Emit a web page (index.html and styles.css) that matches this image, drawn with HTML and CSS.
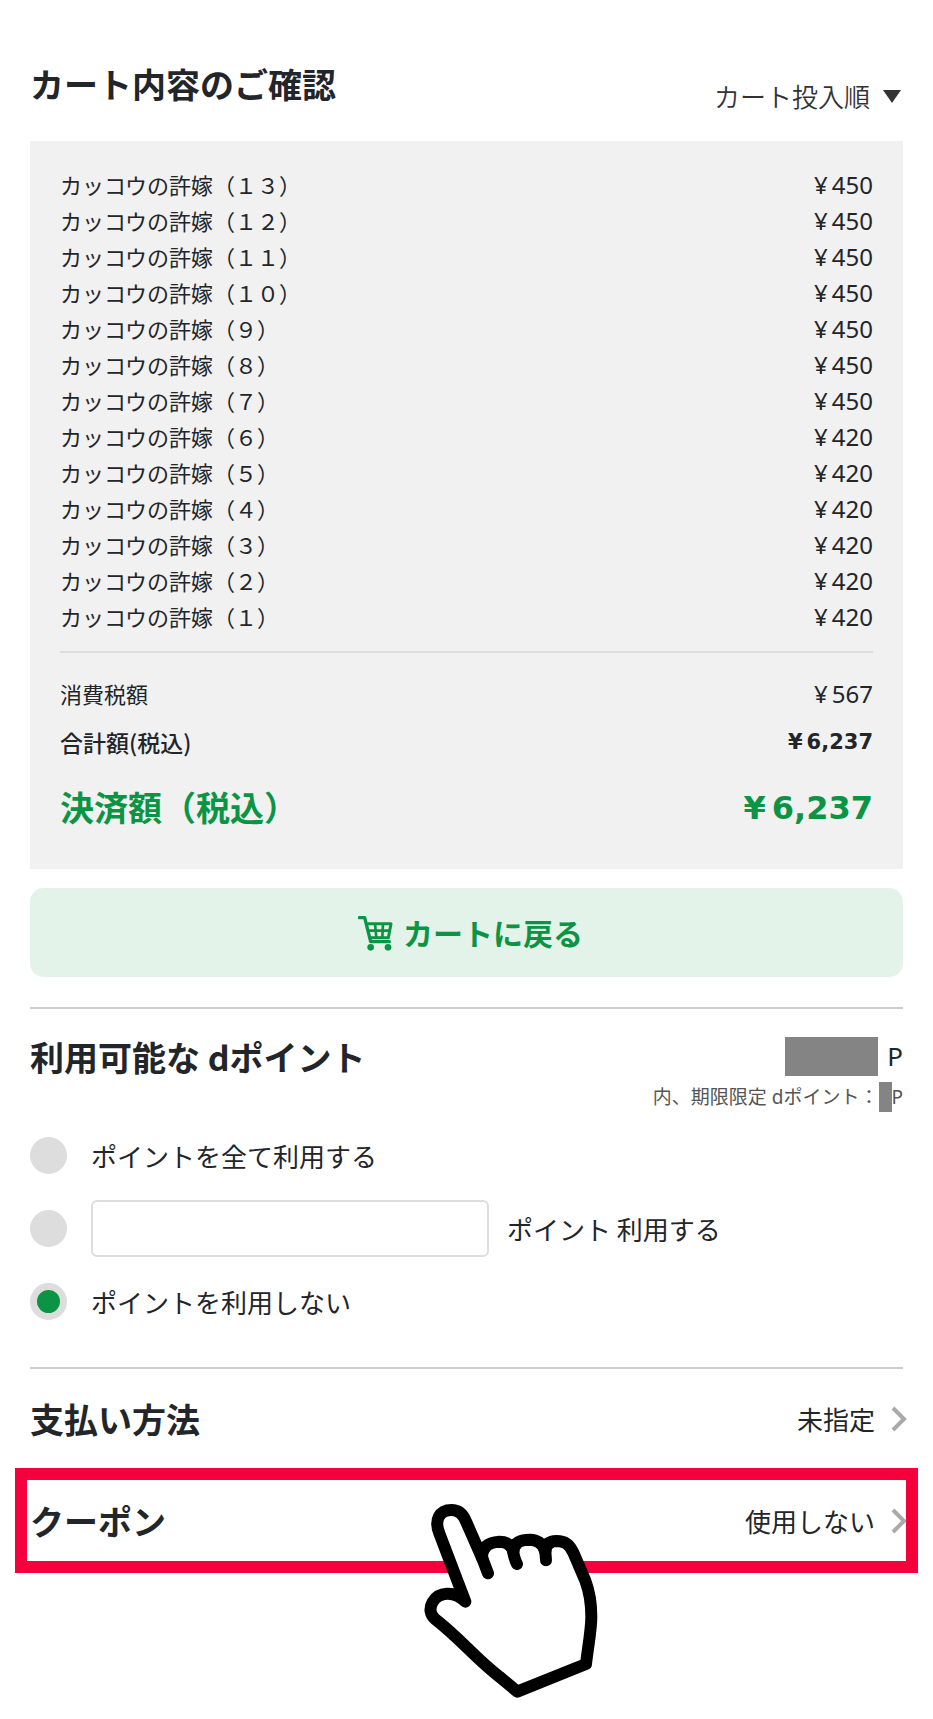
FILE: index.html
```html
<!DOCTYPE html>
<html lang="ja">
<head>
<meta charset="utf-8">
<meta name="viewport" content="width=device-width, initial-scale=1">
<title>カート内容のご確認</title>
<link rel="stylesheet" href="styles.css">
</head>
<body>
<main class="page">
  <header class="cart-head">
    <h1 class="heading">カート内容のご確認</h1>
    <div class="sort">
      <select class="sort-select" aria-label="並び順"><option>カート投入順</option></select>
      <svg class="sort-arrow" viewBox="0 0 18 13" aria-hidden="true"><path d="M0 0H18L9 13Z" fill="#333"/></svg>
    </div>
  </header>

  <section class="summary">
    <table class="items">
      <tbody>
        <tr><td>カッコウの許嫁（１３）</td><td class="price"><span class="yen">¥</span>450</td></tr>
        <tr><td>カッコウの許嫁（１２）</td><td class="price"><span class="yen">¥</span>450</td></tr>
        <tr><td>カッコウの許嫁（１１）</td><td class="price"><span class="yen">¥</span>450</td></tr>
        <tr><td>カッコウの許嫁（１０）</td><td class="price"><span class="yen">¥</span>450</td></tr>
        <tr><td>カッコウの許嫁（９）</td><td class="price"><span class="yen">¥</span>450</td></tr>
        <tr><td>カッコウの許嫁（８）</td><td class="price"><span class="yen">¥</span>450</td></tr>
        <tr><td>カッコウの許嫁（７）</td><td class="price"><span class="yen">¥</span>450</td></tr>
        <tr><td>カッコウの許嫁（６）</td><td class="price"><span class="yen">¥</span>420</td></tr>
        <tr><td>カッコウの許嫁（５）</td><td class="price"><span class="yen">¥</span>420</td></tr>
        <tr><td>カッコウの許嫁（４）</td><td class="price"><span class="yen">¥</span>420</td></tr>
        <tr><td>カッコウの許嫁（３）</td><td class="price"><span class="yen">¥</span>420</td></tr>
        <tr><td>カッコウの許嫁（２）</td><td class="price"><span class="yen">¥</span>420</td></tr>
        <tr><td>カッコウの許嫁（１）</td><td class="price"><span class="yen">¥</span>420</td></tr>
      </tbody>
    </table>
    <dl class="totals">
      <div class="total-row"><dt>消費税額</dt><dd class="price"><span class="yen">¥</span>567</dd></div>
      <div class="total-row total-sum"><dt>合計額(税込)</dt><dd class="price"><span class="yen">¥</span>6,237</dd></div>
      <div class="total-row total-pay"><dt>決済額（税込）</dt><dd class="price"><span class="yen">¥</span>6,237</dd></div>
    </dl>
  </section>

  <button class="back" type="button">
    <svg class="cart-icon" viewBox="84 108 105 108" fill="none" stroke="#0b9444" aria-hidden="true">
      <path d="M88 116H104L122 188H178" stroke-width="10" stroke-linecap="round" stroke-linejoin="round"/>
      <path d="M112 134H183L175 176H120" stroke-width="9" stroke-linejoin="round"/>
      <path d="M116 155H180M135 134L139 176M159 134L157 176" stroke-width="8"/>
      <circle cx="122" cy="205" r="10" fill="#0b9444" stroke="none"/>
      <circle cx="174" cy="205" r="10" fill="#0b9444" stroke="none"/>
    </svg>
    カートに戻る
  </button>

  <section class="points">
    <div class="points-head">
      <h2 class="heading">利用可能な dポイント</h2>
      <div class="balance">
        <p class="balance-main"><span class="mask mask-large"></span>P</p>
        <p class="balance-sub">内、期限限定 dポイント：<span class="mask mask-small"></span>P</p>
      </div>
    </div>
    <div class="options">
      <div class="option">
        <input class="radio" type="radio" name="point" id="point-all">
        <label for="point-all">ポイントを全て利用する</label>
      </div>
      <div class="option">
        <input class="radio" type="radio" name="point" id="point-some">
        <input class="amount" type="text" id="point-amount" aria-label="利用するポイント">
        <label for="point-some">ポイント 利用する</label>
      </div>
      <div class="option">
        <input class="radio" type="radio" name="point" id="point-none" checked>
        <label for="point-none">ポイントを利用しない</label>
      </div>
    </div>
  </section>

  <section class="settings">
    <a class="setting" href="#payment">
      <h2 class="heading">支払い方法</h2>
      <span class="setting-value">未指定</span>
      <svg class="chevron" viewBox="0 0 16 26" aria-hidden="true"><path d="M2 2L13 13L2 24" fill="none" stroke="#aaa" stroke-width="4"/></svg>
    </a>
    <a class="setting highlighted" href="#coupon">
      <h2 class="heading">クーポン</h2>
      <span class="setting-value">使用しない</span>
      <svg class="chevron" viewBox="0 0 16 26" aria-hidden="true"><path d="M2 2L13 13L2 24" fill="none" stroke="#aaa" stroke-width="4"/></svg>
      <svg class="hand" viewBox="60 60 546 606" aria-hidden="true">
        <g stroke="#000" stroke-width="36" stroke-linecap="round" stroke-linejoin="round">
          <path fill="#fff" d="M196 365L118 160C102 120 118 90 155 90C176 90 188 101 197 122L247 236C240 205 262 187 298 185C320 185 330 193 337 206C342 190 360 179 390 179C412 180 426 190 433 207C437 190 450 184 470 183C494 183 508 192 521 220L556 302C570 340 574 375 574 410C574 450 564 500 558 552L352 635L298 590C230 538 180 475 105 417C90 404 87 385 98 366C115 336 162 330 196 365Z"/>
          <path fill="none" d="M245 230L264 280M247 236C245 220 248 210 256 203M337 206C341 222 343 238 351 252M341 215C340 203 344 198 350 192M433 207C437 218 438 228 438 241M437 215C437 200 442 195 450 189"/>
        </g>
      </svg>
    </a>
  </section>
</main>
</body>
</html>
```
FILE: styles.css
```css
* { box-sizing: border-box; }

body {
  margin: 0;
  background: #fff;
  color: #222529;
  font-family: "Noto Sans", "Noto Sans CJK JP", sans-serif;
  font-size: 26px;
  line-height: 40px;
}

h1, h2, p, dl, dd { margin: 0; }

.page { padding: 60px 30px 145px; }

.heading {
  font-family: "Noto Sans CJK JP", sans-serif;
  font-size: 34px;
  font-weight: 700;
  line-height: 48px;
}

.cart-head {
  display: flex;
  justify-content: space-between;
  align-items: flex-end;
  margin-bottom: 25px;
}
.cart-head .heading { margin-bottom: 8px; }

.sort { display: flex; align-items: center; gap: 12px; padding-right: 2px; }
.sort-select {
  appearance: none;
  border: 0;
  padding: 0;
  background: none;
  color: #333;
  font: 350 26px/40px "Noto Sans CJK JP", sans-serif;
}
.sort-arrow { width: 18px; height: 13px; }

.summary { padding: 26px 30px 37px; background: #f1f1f1; }

.items { width: 100%; border-collapse: collapse; }
.items td { height: 36px; padding: 0; font-size: 22px; line-height: 36px; }
.price { text-align: right; }
.items .price, .total-row .price { font-size: 24px; }
.yen { margin-right: 4px; }

.totals {
  margin-top: 16px;
  padding-top: 21px;
  border-top: 2px solid #ddd;
}
.total-row {
  display: flex;
  justify-content: space-between;
  align-items: center;
  font-size: 22px;
}
.total-sum { margin-top: 8px; font-weight: 700; }
.total-sum dt { font-weight: 500; font-size: 23px; font-family: "Noto Sans CJK JP", sans-serif; }
.total-pay {
  margin-top: 22px;
  color: #0b9444;
  font-size: 34px;
  font-weight: 700;
  line-height: 48px;
}
.total-sum .price { font-family: "DejaVu Sans", sans-serif; font-size: 21px; }
.total-pay .price { font-family: "DejaVu Sans", sans-serif; font-size: 32px; }
.total-pay .yen { margin-right: 6px; }

.back {
  display: flex;
  justify-content: center;
  align-items: center;
  gap: 10px;
  width: 100%;
  margin: 19px 0 30px;
  padding: 22px 22px 22px 30px;
  border: 0;
  border-radius: 14px;
  background: #e3f3e9;
  color: #0b9444;
  font: 700 30px/45px "Noto Sans CJK JP", sans-serif;
}
.cart-icon { width: 35px; height: 36px; }

.points { padding: 24px 0 37px; border-top: 2px solid #ccc; }
.points-head { display: flex; justify-content: space-between; align-items: flex-start; }
.balance { padding-top: 3px; }
.balance-main, .balance-sub {
  display: flex;
  align-items: center;
  justify-content: flex-end;
}
.balance-sub { margin-top: 6px; color: #555; font-size: 19px; line-height: 30px; }
.mask { background: #848484; }
.mask-large { width: 93px; height: 39px; margin-right: 9px; }
.mask-small { width: 13px; height: 30px; }

.options { display: grid; gap: 16px; margin-top: 15px; }
.option { display: flex; align-items: center; min-height: 57px; }
.radio {
  appearance: none;
  width: 37px;
  height: 37px;
  margin: 0 24px 0 0;
  border-radius: 50%;
  background: #ddd;
}
.radio:checked { border: 7px solid #ddd; background: #0b9444; }
.amount {
  width: 398px;
  max-width: 50%;
  height: 57px;
  margin-right: 18px;
  padding: 0 12px;
  border: 2px solid #ddd;
  border-radius: 6px;
  background: #fff;
  font: inherit;
}

.option label, .setting-value { font-family: "Noto Sans CJK JP", sans-serif; }

.settings { border-top: 2px solid #ccc; }
.setting {
  display: flex;
  align-items: center;
  height: 99px;
  color: inherit;
  text-decoration: none;
}
.setting .heading { flex: 1; }
.chevron { width: 16px; height: 26px; margin: 0 -4px 0 16px; }

.highlighted { position: relative; height: 105px; }
.highlighted::after {
  content: "";
  position: absolute;
  inset: 0 -15px;
  border: 12px solid #f5003c;
}
.hand {
  position: absolute;
  z-index: 1;
  top: 32px;
  left: 390px;
  width: 182px;
  height: 202px;
}
```
